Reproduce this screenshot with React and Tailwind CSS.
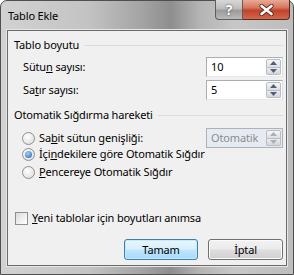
import React, { useState } from 'react';

const font = { fontFamily: '"Noto Sans", "Liberation Sans", sans-serif' };

function Spinner({ disabled }) {
  const arrow = disabled ? '#a9b0bb' : '#4d5f80';
  return (
    <div className="flex flex-col w-[15px] h-full">
      <div className="flex-1 flex items-center justify-center border border-[#b8bcc4] rounded-t-[2px] bg-[linear-gradient(#f6f6f6,#dedede)]">
        <svg width="7" height="4" viewBox="0 0 7 4"><path d="M0 4 L3.5 0 L7 4 Z" fill={arrow} /></svg>
      </div>
      <div className="flex-1 flex items-center justify-center border border-t-0 border-[#b8bcc4] rounded-b-[2px] bg-[linear-gradient(#ececec,#d6d6d6)]">
        <svg width="7" height="4" viewBox="0 0 7 4"><path d="M0 0 L3.5 4 L7 0 Z" fill={arrow} /></svg>
      </div>
    </div>
  );
}

function NumberBox({ value, disabled }) {
  return (
    <div
      className={
        'flex items-stretch w-[77px] h-[20px] border p-px ' +
        (disabled ? 'border-[#adb2b5] bg-[#e6ebf3]' : 'border-[#abadb3] border-b-[#e3e9ef] border-r-[#dbdfe6] bg-white')
      }
    >
      <span className={'flex-1 pl-[3px] leading-[16px] text-[11px] tracking-[-0.15px] overflow-hidden ' + (disabled ? 'text-[#8c8c8c]' : 'text-black')}>{value}</span>
      <Spinner disabled={disabled} />
    </div>
  );
}

function Radio({ checked, children, onClick }) {
  return (
    <div className="flex items-center h-[17px] pl-[14px] gap-[4px] cursor-default" onClick={onClick}>
      <span className="w-[13px] h-[13px] rounded-full border border-[#8f8f8f] bg-[radial-gradient(circle_at_40%_35%,#ffffff,#d8d8d8)] flex items-center justify-center">
        {checked && (
          <span className="w-[7px] h-[7px] rounded-full bg-[radial-gradient(circle_at_40%_35%,#9fd3ff,#1f5fa8)]" />
        )}
      </span>
      <span>{children}</span>
    </div>
  );
}

function Separator({ title }) {
  return (
    <div className="flex items-center h-[16px] pl-[6px] pr-[3px] gap-[5px]">
      <span className="whitespace-nowrap">{title}</span>
      <div className="flex-1 h-px bg-[#dcdcdc]" />
    </div>
  );
}

export default function App() {
  const [mode, setMode] = useState(1);
  const [remember, setRemember] = useState(false);

  return (
    <div style={font} className="w-[294px] h-[275px] flex flex-col text-black text-[11px] tracking-[-0.15px] select-none">
      <div className="flex-1 flex flex-col rounded-t-[7px] border border-[#4f4f4f] bg-[linear-gradient(90deg,#d2d2d2_0%,#c3c3c3_30%,#a4a4a4_48%,#8e8e8e_58%,#b4b4b4_68%,#c7c7c7_80%,#bdbdbd_100%)] px-[6px] pb-[8px]">
        {/* Title bar */}
        <div className="flex h-[29px] shrink-0">
          <span className="pl-[1px] pt-[7px] leading-[16px]">Tablo Ekle</span>
          <div className="ml-auto flex h-[20px] mt-[-1px] mr-[-3px]">
            <div className="w-[28px] h-full flex items-center justify-center border border-[#5e5e5e] border-t-0 rounded-bl-[4px] bg-[linear-gradient(#d8d8d8_0%,#bdbdbd_45%,#9c9c9c_55%,#b9b9b9_100%)]">
              <span className="text-white font-bold text-[14px] leading-none [text-shadow:0_0_2px_#333]">?</span>
            </div>
            <div className="w-[47px] h-full flex items-center justify-center border border-l-0 border-[#5a2a20] border-t-0 rounded-br-[4px] bg-[linear-gradient(#e9a996_0%,#d7765d_40%,#c0432a_55%,#d3674c_100%)]">
              <svg width="15" height="12" viewBox="0 0 15 12">
                <path d="M2.5 2 L12.5 10 M12.5 2 L2.5 10" stroke="#5a2418" strokeWidth="4.2" strokeLinecap="round" />
                <path d="M2.5 2 L12.5 10 M12.5 2 L2.5 10" stroke="#ffffff" strokeWidth="2.6" strokeLinecap="round" />
              </svg>
            </div>
          </div>
        </div>

        {/* Client area */}
        <div className="flex-1 flex flex-col bg-[#f0f0f0] border border-[#6a6a6a] outline outline-1 outline-[#e6e6e6]">
          <div className="pt-[6px]">
            <Separator title="Tablo boyutu" />
          </div>

          <div className="flex items-center justify-between pl-[15px] pr-[3px] mt-[4px]">
            <span>Sütu<u>n</u> sayısı:</span>
            <NumberBox value="10" />
          </div>
          <div className="flex items-center justify-between pl-[15px] pr-[3px] mt-[3px]">
            <span>Sa<u>t</u>ır sayısı:</span>
            <NumberBox value="5" />
          </div>

          <div className="mt-[7px]">
            <Separator title="Otomatik Sığdırma hareketi" />
          </div>

          <div className="flex items-center justify-between pr-[3px] mt-[5px]">
            <Radio checked={mode === 0} onClick={() => setMode(0)}>
              Sa<u>b</u>it sütun genişliği:
            </Radio>
            <NumberBox value="Otomatik" disabled />
          </div>
          <div className="mt-[-2px]">
            <Radio checked={mode === 1} onClick={() => setMode(1)}>
              İçi<u>n</u>dekilere göre Otomatik Sığdır
            </Radio>
          </div>
          <div className="mt-[1px]">
            <Radio checked={mode === 2} onClick={() => setMode(2)}>
              <u>P</u>encereye Otomatik Sığdır
            </Radio>
          </div>

          <div className="flex items-center gap-[4px] pl-[7px] mt-[29px]" onClick={() => setRemember(!remember)}>
            <span className="w-[13px] h-[13px] border border-[#8f8f8f] bg-[linear-gradient(135deg,#dcdcdc,#ffffff)] flex items-center justify-center">
              {remember && <span className="text-[10px] leading-none">✓</span>}
            </span>
            <span><u>Y</u>eni tablolar için boyutları anımsa</span>
          </div>

          <div className="flex justify-end gap-[10px] pr-[3px] mt-[12px]">
            <button className="w-[74px] h-[21px] rounded-[3px] border border-[#3c7fb1] bg-[linear-gradient(#eaf6fd_0%,#d9f0fc_45%,#bee6fd_55%,#a7d9f5_100%)] leading-none shadow-[inset_0_0_0_1px_#c6e9fc]">
              Tamam
            </button>
            <button className="w-[75px] h-[21px] rounded-[3px] border border-[#707070] bg-[linear-gradient(#f2f2f2_0%,#ebebeb_45%,#dddddd_55%,#cfcfcf_100%)] leading-none shadow-[inset_0_0_0_1px_#fbfbfb]">
              İptal
            </button>
          </div>
        </div>
      </div>
    </div>
  );
}
